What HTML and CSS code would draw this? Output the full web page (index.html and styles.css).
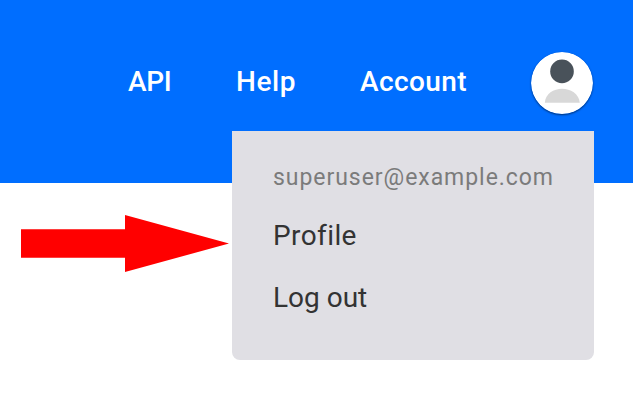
FILE: index.html
```html
<!DOCTYPE html>
<html lang="en">
<head>
<meta charset="utf-8">
<title>Account menu</title>
<link rel="stylesheet" href="styles.css">
</head>
<body>
<header class="topbar">
  <nav class="nav">
    <a class="nav-link api">API</a>
    <a class="nav-link help">Help</a>
    <a class="nav-link account">Account</a>
  </nav>
  <div class="user">
    <svg class="avatar" viewBox="0 0 62 62" aria-hidden="true">
      <circle cx="31" cy="31" r="31" fill="#fff"/>
      <circle cx="31" cy="19.4" r="11.8" fill="#49525a"/>
      <path d="M13.8 50.8C15 32 47 32 48.8 50.8Z" fill="#d8d8d8"/>
    </svg>
    <div class="menu">
      <div class="email">superuser@example.com</div>
      <a class="menu-item profile">Profile</a>
      <a class="menu-item logout">Log out</a>
    </div>
  </div>
</header>
<main class="content">
  <svg class="arrow" viewBox="0 0 208 57" aria-hidden="true">
    <path d="M0 14.3H104V0L208 28.5L104 57V42.7H0Z" fill="#f00"/>
  </svg>
</main>
</body>
</html>
```
FILE: styles.css
```css
html,
body {
  min-height: 401px;
}

body {
  margin: 0;
  background: #fff;
  font-family: Roboto, "Liberation Sans", sans-serif;
}

.topbar {
  display: flex;
  justify-content: flex-end;
  box-sizing: border-box;
  height: 183px;
  padding: 52px 40px 0 0;
  background: #006eff;
}

.nav {
  display: flex;
  height: 60px;
  align-items: center;
  color: #fff;
  font-size: 28px;
  font-weight: 500;
  line-height: 34px;
}

.nav-link {
  white-space: nowrap;
}

.api {
  width: 108px;
  letter-spacing: -0.4px;
}

.help {
  width: 124px;
  letter-spacing: 0.6px;
}

.account {
  width: 171px;
  letter-spacing: 0.4px;
}

.user {
  position: relative;
  width: 62px;
}

.avatar {
  display: block;
  width: 62px;
  height: 62px;
  border-radius: 50%;
  box-shadow: 0 1px 2px rgba(0, 0, 0, 0.55);
}

.menu {
  position: absolute;
  z-index: 1;
  top: 79px;
  right: -1px;
  display: flex;
  flex-direction: column;
  box-sizing: border-box;
  width: 362px;
  height: 229px;
  padding: 32px 0 0 41px;
  border-radius: 0 0 8px 8px;
  background: #e0dfe4;
  color: #333;
}

.email {
  color: #7b7b7b;
  font-size: 23px;
  line-height: 30px;
  letter-spacing: 0.95px;
}

.menu-item {
  font-size: 28px;
  line-height: 34px;
  letter-spacing: 0.4px;
}

.profile {
  margin-top: 26px;
}

.logout {
  margin-top: 28px;
  letter-spacing: 0;
}

.content {
  padding: 32px 0 0 21px;
}

.arrow {
  display: block;
  width: 208px;
  height: 57px;
}
```
